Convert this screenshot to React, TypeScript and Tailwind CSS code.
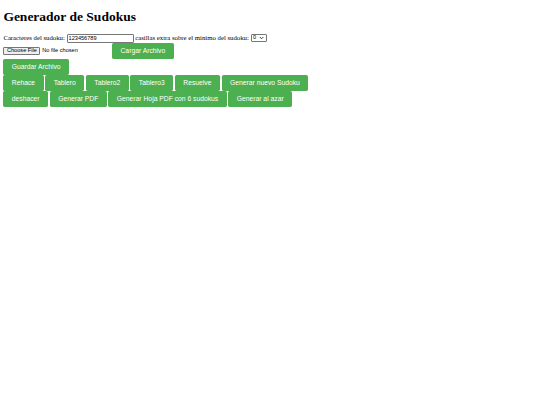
const btn =
  "shrink-0 rounded-[1.7px] bg-[#4caf50] px-[8.44px] py-[4.22px] font-['Liberation_Sans',Arial,sans-serif] text-[6.75px] leading-[7.76px] text-white whitespace-nowrap"

function Btn({ children }: { children: string }) {
  return <button className={btn}>{children}</button>
}

export default function App() {
  return (
    <div className="min-h-[405px] bg-white px-[3.375px] font-['Liberation_Serif','Times_New_Roman',serif] text-[6.75px] leading-[7.76px] text-black">
      <h1 className="mt-[9.05px] mb-[9.05px] text-[13.5px] leading-[15.6px] font-bold">
        Generador de Sudokus
      </h1>

      <div className="flex h-[8.9px] items-center gap-[1.69px]">
        <label>Caracteres del sudoku:</label>
        <input
          type="text"
          defaultValue="123456789"
          className="h-[8.9px] w-[67px] rounded-[1px] border-[0.5px] border-[#767676] px-[1px] font-['Liberation_Sans',Arial,sans-serif] text-[5.6px] outline-none"
        />
        <label>casillas extra sobre el mínimo del sudoku:</label>
        <div className="flex h-[8px] w-[16px] items-center justify-between rounded-[1px] border-[0.5px] border-[#767676] px-[1.5px] font-['Liberation_Sans',Arial,sans-serif] text-[5.6px]">
          <span>0</span>
          <svg width="5" height="4" viewBox="0 0 10 8" fill="none">
            <path d="M1.5 2 L5 5.5 L8.5 2" stroke="#222" strokeWidth="1.8" />
          </svg>
        </div>
      </div>

      <div className="flex items-center gap-[1.69px]">
        <div className="flex w-[107px] items-center gap-[1.9px] font-['Liberation_Sans',Arial,sans-serif] text-[5.6px]">
          <span className="flex h-[8.2px] items-center rounded-[1px] border-[0.5px] border-[#767676] bg-[#efefef] px-[2.6px]">
            Choose File
          </span>
          <span>No file chosen</span>
        </div>
        <Btn>Cargar Archivo</Btn>
      </div>

      <div className="flex">
        <Btn>Guardar Archivo</Btn>
      </div>

      <div className="flex gap-[1.69px]">
        <Btn>Rehace</Btn>
        <Btn>Tablero</Btn>
        <Btn>Tablero2</Btn>
        <Btn>Tablero3</Btn>
        <Btn>Resuelve</Btn>
        <Btn>Generar nuevo Sudoku</Btn>
      </div>

      <div className="flex gap-[1.69px]">
        <Btn>deshacer</Btn>
        <Btn>Generar PDF</Btn>
        <Btn>Generar Hoja PDF con 6 sudokus</Btn>
        <Btn>Generar al azar</Btn>
      </div>
    </div>
  )
}
